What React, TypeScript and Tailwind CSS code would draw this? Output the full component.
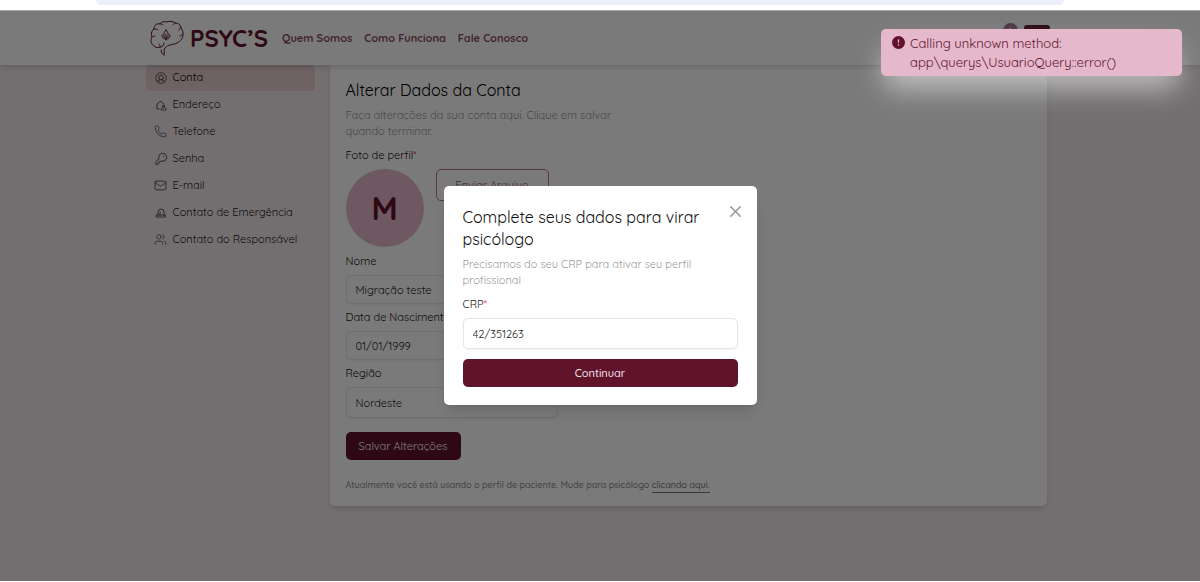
import type { ReactNode } from 'react'
import { Mail, Phone, Users, X } from 'lucide-react'
import { PiKey, PiUserCircle } from 'react-icons/pi'
import { BsExclamationCircleFill } from 'react-icons/bs'

function HomeUserIcon() {
  return (
    <svg viewBox="0 0 24 24" className="size-3" fill="none" stroke="currentColor" strokeWidth="2" strokeLinecap="round" strokeLinejoin="round">
      <path d="M8 20H4V10l6-5h2l5 4" />
      <circle cx="17" cy="14" r="2" />
      <path d="M12 21c0-3 2-4 5-4s5 1 5 4z" />
    </svg>
  )
}

function SirenIcon() {
  return (
    <svg viewBox="0 0 24 24" className="size-3" fill="none" stroke="currentColor" strokeWidth="2" strokeLinecap="round" strokeLinejoin="round">
      <path d="M6 16v-6a6 6 0 0 1 12 0v6M3 16h18v4H3zM10 10v6" />
    </svg>
  )
}

function BrainLogo() {
  return (
    <svg viewBox="0 0 34 36" className="h-9 w-[34px]" fill="none" stroke="currentColor" strokeWidth="1" strokeLinecap="round" strokeLinejoin="round">
      <path d="M14 35c1-3-1-5 1-7 3-4 8-3 12-5 4-2 6-5 6-9 0-3-1-5-2-6 0-3-3-5-6-5-2-2-6-2-8-1-3-1-6 0-7 2-3-1-6 1-6 5-3 2-3 6-2 8-2 3-1 7 2 9 2 2 5 2 6 1 2 0 4-1 4-4" />
      <path d="M11 30c0 2 1 4 3 5M10 4c1 0 2 0 3 1M25 3c-1 0-1 1-2 2M31 8c-1 0-2 1-2 2M4 9c2 0 3 0 4 1M2 17c1-1 2-1 3-1M33 14c-1 1-2 2-3 2M10 27c0-1 0-2-1-3" />
      <path d="M16 10c-3 3-3 6 0 9 3-3 3-6 0-9zM16 14v6M12 15c0 3 2 4 4 4 2 0 4-1 4-4" />
    </svg>
  )
}

const menu: Array<[string, ReactNode]> = [
  ['Conta', <PiUserCircle size={14} />],
  ['Endereço', <HomeUserIcon />],
  ['Telefone', <Phone size={13} strokeWidth={1.5} />],
  ['Senha', <PiKey size={14} />],
  ['E-mail', <Mail size={13} strokeWidth={1.75} />],
  ['Contato de Emergência', <SirenIcon />],
  ['Contato do Responsável', <Users size={13} strokeWidth={1.5} />],
]

const fieldClass =
  'w-full rounded-[5px] border border-[#e5e5e5] bg-white px-[9px] text-[11px] text-[#222] shadow-xs outline-none'

function Header() {
  return (
    <header className="relative z-10 flex h-[54px] items-center bg-white px-[150px] text-[#60142c] shadow-md">
      <a href="#inicio" className="flex items-center gap-1.5">
        <BrainLogo />
        <span className="text-2xl font-bold">PSYC’S</span>
      </a>
      <nav className="ml-3.5 flex gap-3 text-[11px] font-bold text-[#8c4f63]">
        <a href="#quem-somos">Quem Somos</a>
        <a href="#como-funciona">Como Funciona</a>
        <a href="#fale-conosco">Fale Conosco</a>
      </nav>
      <div className="ml-auto flex items-center gap-1.5">
        <span className="mb-4 flex size-[15px] items-center justify-center rounded-full bg-[#a2708a] text-[8px] text-white">1</span>
        <button aria-label="Menu" className="size-[26px] rounded-[3px] bg-[#60142c]" />
      </div>
    </header>
  )
}

function Sidebar() {
  return (
    <aside className="w-[169px] shrink-0 pt-px">
      <ul>
        {menu.map(([label, icon], i) => (
          <li key={label}>
            <a
              href="#conta"
              className={`flex h-[27px] items-center rounded-[5px] text-[11px] ${i === 0 ? 'bg-[#e5ccd0] text-black' : 'text-[#22181c]'}`}
            >
              <span className="mr-[5px] flex w-[22px] items-center justify-end text-[#5c5256]">
                <span className="flex w-3.5 justify-center">{icon}</span>
              </span>
              {label}
            </a>
          </li>
        ))}
      </ul>
    </aside>
  )
}

function AccountCard() {
  return (
    <section className="min-w-0 flex-1 rounded-[5px] bg-white px-4 pt-4 pb-3 text-[11px] leading-4 shadow-md">
      <h1 className="text-base leading-[22px] text-black">Alterar Dados da Conta</h1>
      <p className="mt-1.5 w-[280px] text-[#999]">
        Faça alterações da sua conta aqui. Clique em salvar quando terminar.
      </p>
      <p className="mt-2 text-[#111]">
        Foto de perfil<span className="text-red-500">*</span>
      </p>
      <div className="mt-1.5 flex gap-3">
        <div className="flex size-[78px] items-center justify-center rounded-full bg-[#e5b8cb] text-[32px] font-bold text-[#60142c]">M</div>
        <button className="h-8 w-[113px] rounded-[5px] border border-[#b3738a] text-[#a0607a]">Enviar Arquivo</button>
      </div>
      <form className="mt-1.5 w-[212px]">
        <div className="flex flex-col gap-[5px] text-[#111]">
          <div>
            <label htmlFor="nome" className="block">Nome</label>
            <input id="nome" defaultValue="Migração teste" className={`${fieldClass} mt-1.5 h-[29px]`} />
          </div>
          <div>
            <label htmlFor="nascimento" className="block">Data de Nascimento</label>
            <input id="nascimento" defaultValue="01/01/1999" className={`${fieldClass} mt-1.5 h-[29px]`} />
          </div>
          <div>
            <label htmlFor="regiao" className="block">Região</label>
            <select id="regiao" className={`${fieldClass} mt-1.5 h-[31px] appearance-none`}>
              <option>Nordeste</option>
            </select>
          </div>
        </div>
        <button type="button" className="mt-3.5 h-7 w-[115px] rounded-[5px] bg-[#60142c] text-white">Salvar Alterações</button>
      </form>
      <p className="mt-4 text-[9px] leading-[18px] font-medium text-[#8a8a8a]">
        Atualmente você está usando o perfil de paciente. Mude para psicólogo{' '}
        <a href="#psicologo" className="border-b border-[#777] pb-0.5 text-[#777]">clicando aqui.</a>
      </p>
    </section>
  )
}

function CrpDialog() {
  return (
    <div role="dialog" aria-labelledby="crp-title" className="relative w-[313px] rounded-[5px] bg-white px-[19px] pt-5 pb-[18px] text-[11px] leading-4 shadow-lg">
      <button aria-label="Fechar" className="absolute top-4 right-3 text-[#999]">
        <X size={19} strokeWidth={2} />
      </button>
      <h2 id="crp-title" className="pr-8 text-base leading-[22px] text-[#111]">Complete seus dados para virar psicólogo</h2>
      <p className="mt-1.5 pr-8 text-[#999]">Precisamos do seu CRP para ativar seu perfil profissional</p>
      <form className="mt-2">
        <label htmlFor="crp" className="block text-[#222]">
          CRP<span className="text-red-500">*</span>
        </label>
        <input id="crp" defaultValue="42/351263" className={`${fieldClass} mt-1.5 h-[31px]`} />
        <button type="button" className="mt-2.5 block h-7 w-full rounded-[5px] bg-[#60142c] font-medium text-[#f5e6ec]">Continuar</button>
      </form>
    </div>
  )
}

export default function App() {
  return (
    <div className="flex min-h-screen flex-col bg-white font-['Quicksand','Lato',sans-serif]">
      <div className="h-2.5 px-24">
        <div className="mr-10 h-[5px] rounded-b-full bg-[#eaeff9]" />
      </div>
      <div className="relative mb-px flex-1 overflow-hidden border-t border-[#aaa] bg-[#f0e8ea]">
        <Header />
        <main className="-mt-0.5 flex justify-center pr-2">
          <div className="flex w-[901px] max-w-full gap-[15px]">
            <Sidebar />
            <AccountCard />
          </div>
        </main>
        <div className="absolute inset-0 z-20 flex items-center justify-center bg-black/52 pb-px">
          <CrpDialog />
        </div>
        <div role="alert" className="absolute top-[18px] right-[18px] z-30 flex w-[301px] gap-[5px] rounded-[5px] bg-[#e5b8cb] px-[11px] pt-[5px] pb-1 text-[13px] leading-[19px] text-[#60142c] shadow-[0_16px_28px_-4px_rgba(255,255,255,0.55)]">
          <BsExclamationCircleFill size={13} className="mt-0.5 shrink-0" />
          <p>
            Calling unknown method:
            <br />
            app\querys\UsuarioQuery::error()
          </p>
        </div>
      </div>
    </div>
  )
}
